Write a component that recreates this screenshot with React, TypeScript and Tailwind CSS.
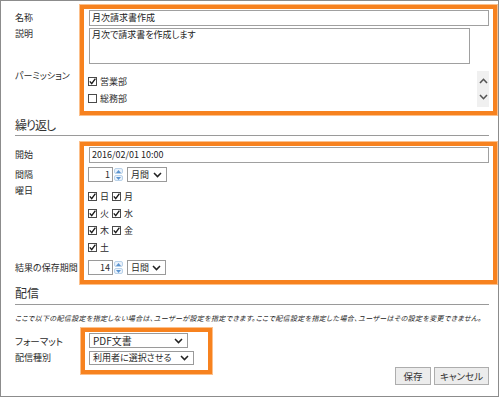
import React from "react";

const Check = ({ checked }: { checked?: boolean }) => (
  <span className="flex h-[9px] w-[9px] shrink-0 items-center justify-center border border-[#4a4a4a] bg-white">
    {checked && (
      <svg width="7" height="7" viewBox="0 0 7 7">
        <path d="M0.8 3.4 L2.7 5.6 L6.4 0.6" fill="none" stroke="#1a1a1a" strokeWidth="1.4" />
      </svg>
    )}
  </span>
);

const Chevron = () => (
  <svg width="9" height="6" viewBox="0 0 9 6">
    <path d="M1 1 L4.5 4.6 L8 1" fill="none" stroke="#222" strokeWidth="1.5" />
  </svg>
);

const Select = ({ value, w, h }: { value: string; w: string; h: string }) => (
  <div className={`flex items-center justify-between border border-[#9a9a9a] bg-white pl-[3px] pr-[4px] ${w} ${h}`}>
    <span>{value}</span>
    <Chevron />
  </div>
);

const NumberBox = ({ value }: { value: string }) => (
  <div className="-ml-[1px] flex h-[15px]">
    <div className="flex w-[25px] items-center justify-end border border-[#9a9a9a] bg-white pr-[2px]">{value}</div>
    <div className="flex w-[10px] flex-col gap-[1px] py-[1px] pl-[1px]">
      <div className="flex flex-1 items-center justify-center rounded-[2px] border border-[#b9d2ea] bg-[#eaf2fb]">
        <svg width="5" height="3" viewBox="0 0 5 3">
          <path d="M0 3 L2.5 0 L5 3 Z" fill="#5b93cf" />
        </svg>
      </div>
      <div className="flex flex-1 items-center justify-center rounded-[2px] border border-[#b9d2ea] bg-[#eaf2fb]">
        <svg width="5" height="3" viewBox="0 0 5 3">
          <path d="M0 0 L2.5 3 L5 0 Z" fill="#5b93cf" />
        </svg>
      </div>
    </div>
  </div>
);

const CheckItem = ({ label, checked }: { label: string; checked?: boolean }) => (
  <div className="flex items-center gap-[3px]">
    <Check checked={checked} />
    <span>{label}</span>
  </div>
);

const Highlight = ({ pos }: { pos: string }) => (
  <div className={`pointer-events-none absolute border-[4px] border-[#f7821f] shadow-[0_0_0_1px_#fcc08c] ${pos}`} />
);

export default function App() {
  const week = [
    ["日", "月"],
    ["火", "水"],
    ["木", "金"],
    ["土"],
  ];

  return (
    <div className="relative h-[397px] w-[499px] border border-[#8c8c8c] bg-white pl-[14px] pr-[9px] pt-[9px] font-['Meiryo_UI','Noto_Sans_CJK_JP',sans-serif] text-[9px] leading-[12px] text-[#2b2b2b] [font-feature-settings:'palt']">
      {/* 基本情報 */}
      <div className="flex h-[16px] items-center">
        <div className="w-[74px]">名称</div>
        <div className="flex h-[16px] w-[400px] items-center border border-[#a0a0a0] px-[2px] text-[#222]">月次請求書作成</div>
      </div>
      <div className="mt-[2px] flex h-[36px]">
        <div className="w-[74px]">説明</div>
        <div className="h-[36px] w-[381px] border border-[#a0a0a0] px-[2px] text-[#222]">月次で請求書を作成します</div>
      </div>
      <div className="mt-[7px] flex h-[36px]">
        <div className="-mt-[1px] w-[73px]">パーミッション</div>
        <div className="flex w-[401px]">
          <div className="flex flex-1 flex-col pt-[2px]">
            <div className="flex h-[18px] items-center">
              <CheckItem label="営業部" checked />
            </div>
            <div className="flex h-[18px] items-center">
              <CheckItem label="総務部" />
            </div>
          </div>
          <div className="flex w-[12px] flex-col items-center justify-around bg-[#f0f0f0] py-[2px]">
            <svg width="9" height="6" viewBox="0 0 9 6">
              <path d="M1 5 L4.5 1.3 L8 5" fill="none" stroke="#555" strokeWidth="1.6" />
            </svg>
            <svg width="9" height="6" viewBox="0 0 9 6">
              <path d="M1 1 L4.5 4.7 L8 1" fill="none" stroke="#555" strokeWidth="1.6" />
            </svg>
          </div>
        </div>
      </div>

      {/* 繰り返し */}
      <div className="mt-[10px] h-[16px] text-[12px] leading-[16px] tracking-[-1px] text-[#333]">繰り返し</div>
      <div className="mt-[2px] h-px w-[474px] bg-[#9a9a9a]" />
      <div className="mt-[11px] flex h-[16px] items-center">
        <div className="w-[74px]">開始</div>
        <div className="flex h-[16px] w-[400px] items-center border border-[#a0a0a0] px-[2px] text-[#222]">2016/02/01 10:00</div>
      </div>
      <div className="mt-[4px] flex h-[15px] items-center">
        <div className="w-[74px]">間隔</div>
        <NumberBox value="1" />
        <div className="ml-[4px]">
          <Select value="月間" w="w-[40px]" h="h-[15px]" />
        </div>
      </div>
      <div className="mt-[4px] flex">
        <div className="-mt-[1px] w-[73px]">曜日</div>
        <div className="flex flex-col pt-[2px]">
          {week.map((row, i) => (
            <div key={i} className="flex h-[17px] items-center gap-[3px]">
              {row.map((d) => (
                <CheckItem key={d} label={d} checked />
              ))}
            </div>
          ))}
        </div>
      </div>
      <div className="mt-[4px] flex h-[15px] items-center">
        <div className="w-[74px]">結果の保存期間</div>
        <NumberBox value="14" />
        <div className="ml-[4px]">
          <Select value="日間" w="w-[39px]" h="h-[15px]" />
        </div>
      </div>

      {/* 配信 */}
      <div className="mt-[10px] h-[16px] text-[12px] leading-[16px] text-[#333]">配信</div>
      <div className="mt-[3px] h-px w-[474px] bg-[#9a9a9a]" />
      <div className="mt-[8px] h-[10px] text-[7px] leading-[10px] tracking-[0.35px] italic text-[#222]">
        ここで以下の配信設定を指定しない場合は、ユーザーが設定を指定できます。ここで配信設定を指定した場合、ユーザーはその設定を変更できません。
      </div>
      <div className="mt-[10px] flex h-[15px] items-center">
        <div className="w-[74px] text-[9.5px]">フォーマット</div>
        <div className="text-[10px]">
          <Select value="PDF文書" w="w-[99px]" h="h-[15px]" />
        </div>
      </div>
      <div className="mt-[3px] flex h-[14px] items-center">
        <div className="w-[74px]">配信種別</div>
        <Select value="利用者に選択させる" w="w-[105px]" h="h-[14px]" />
      </div>
      <div className="mt-[2px] flex justify-end gap-[3px]">
        <button className="flex h-[18px] w-[36px] items-center justify-center border border-[#adadad] bg-[#ececec] text-[9.5px] text-[#333]">保存</button>
        <button className="flex h-[18px] w-[55px] items-center justify-center border border-[#adadad] bg-[#ececec] text-[9.5px] text-[#333]">キャンセル</button>
      </div>

      {/* 注目枠 */}
      <Highlight pos="left-[79px] top-[4px] h-[110px] w-[417px]" />
      <Highlight pos="left-[79px] top-[141px] h-[142px] w-[417px]" />
      <Highlight pos="left-[80px] top-[327px] h-[46px] w-[131px]" />
    </div>
  );
}
